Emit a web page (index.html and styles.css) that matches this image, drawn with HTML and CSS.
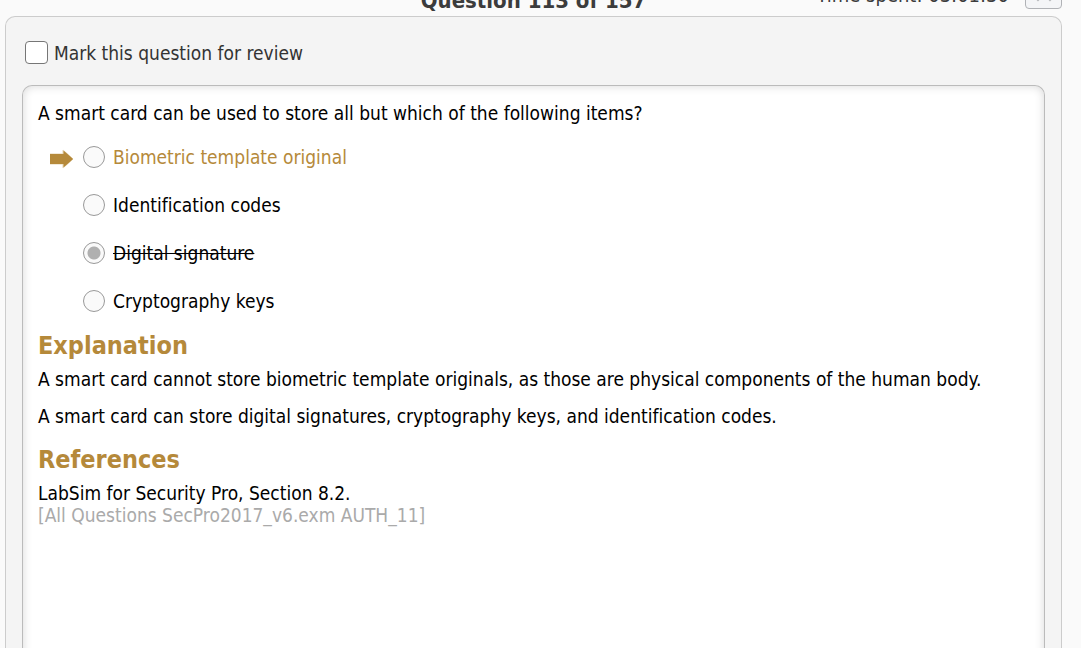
FILE: index.html
```html
<!DOCTYPE html>
<html lang="en">
<head>
<meta charset="utf-8">
<title>Question 113 of 157</title>
<link rel="stylesheet" href="styles.css">
</head>
<body>
<header class="topbar">
  <h1 class="title">Question 113 of 157</h1>
  <div class="tools">
    <span class="time">Time spent: 03:01:30</span>
    <button class="tool-button" type="button" aria-label="Expand">
      <svg width="20" height="20" viewBox="0 0 20 20" fill="none" stroke="#b5b7ba" stroke-width="2"><path d="M0 8l4 4 4-4M12 8l4 4 4-4"/></svg>
    </button>
  </div>
</header>
<main class="panel">
  <label class="review"><input class="check" type="checkbox"><span>Mark this question for review</span></label>
  <section class="card">
    <p>A smart card can be used to store all but which of the following items?</p>
    <div class="answers">
      <label class="answer correct">
        <svg class="arrow" width="25" height="20" viewBox="0 0 25 20"><path fill="#b5893a" stroke="#e6d5b4" d="M0 5h13V1l10 9-10 9v-4H0z"/><path fill="#b5893a" d="M0 5h14V2l9 8-9 8v-3H0z"/></svg>
        <input class="radio" type="radio" name="answer"><span>Biometric template original</span>
      </label>
      <label class="answer"><input class="radio" type="radio" name="answer"><span>Identification codes</span></label>
      <label class="answer wrong"><input class="radio" type="radio" name="answer" checked><span>Digital signature</span></label>
      <label class="answer"><input class="radio" type="radio" name="answer"><span>Cryptography keys</span></label>
    </div>
    <h2 class="heading">Explanation</h2>
    <p class="para">A smart card cannot store biometric template originals, as those are physical components of the human body.</p>
    <p class="para">A smart card can store digital signatures, cryptography keys, and identification codes.</p>
    <h2 class="heading">References</h2>
    <p>LabSim for Security Pro, Section 8.2.</p>
    <p class="source">[All Questions SecPro2017_v6.exm AUTH_11]</p>
  </section>
</main>
</body>
</html>
```

FILE: styles.css
```css
* { box-sizing: border-box; }
body {
  margin: 0;
  height: 100vh;
  overflow: hidden;
  display: flex;
  flex-direction: column;
  background: #fafafa;
  color: #000;
  font: 19px/22px Tahoma, "DejaVu Sans Condensed", "DejaVu Sans", sans-serif;
  font-variant-ligatures: none;
}
p, h1, h2 { margin: 0; }
.topbar {
  flex: none;
  height: 16px;
  padding: 0 19px 0 5px;
  display: grid;
  grid-template-columns: 1fr auto 1fr;
  align-items: end;
  align-content: end;
  color: #3c3c3c;
}
.title {
  grid-column: 2;
  padding-bottom: 1px;
  font-size: 22px;
  line-height: 28px;
}
.tools {
  display: flex;
  justify-content: flex-end;
  align-items: flex-end;
  gap: 16px;
  padding-bottom: 7px;
}
.time {
  padding-bottom: 3px;
  font-size: 20px;
}
.tool-button {
  width: 37px;
  height: 30px;
  padding: 8px 0 0;
  border: 1px solid #b0b2b6;
  border-radius: 4px;
  background: #f4f5f7;
}
.panel {
  flex: 1;
  display: flex;
  flex-direction: column;
  margin: 0 19px 0 5px;
  padding: 24px 16px 0;
  border: 1px solid #ccc;
  border-bottom: 0;
  border-radius: 10px 10px 0 0;
  background: #f4f4f4;
}
.review {
  display: flex;
  align-items: center;
  gap: 6px;
  margin: 0 0 21px 3px;
  color: #333;
}
.check, .radio {
  appearance: none;
  margin: 0;
  flex: none;
  width: 23px;
  height: 23px;
  border: 1px solid #767676;
  border-radius: 4px;
  background: #fff;
}
.radio {
  width: 22px;
  height: 22px;
  border-color: #999;
  border-radius: 50%;
  background: #fafafa;
}
.radio:checked {
  background: radial-gradient(circle, #b0b0b0 6px, #fafafa 7px);
}
.card {
  flex: 1;
  margin-bottom: -20px;
  padding: 16px 15px 0;
  border: 1px solid #bbb;
  border-bottom: 0;
  border-radius: 10px 10px 0 0;
  background: #fff;
  box-shadow: inset 0 0 10px #d8d8d8;
}
.answers { padding: 9px 0 3px; }
.answer {
  display: flex;
  align-items: center;
  gap: 8px;
  height: 48px;
  padding-left: 45px;
}
.correct { padding-left: 12px; color: #b5893a; }
.arrow { margin-top: 4px; }
.wrong span { text-decoration: line-through; }
.heading {
  padding: 2px 0 6px;
  color: #b5893a;
  font-size: 25px;
  line-height: 32px;
}
.para { padding-bottom: 15px; }
.source { color: #aaa; }
```
